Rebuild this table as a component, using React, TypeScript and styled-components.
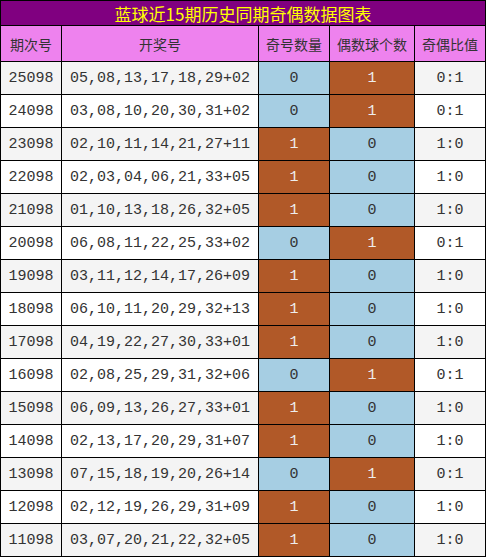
import React from 'react'
import styled, { createGlobalStyle } from 'styled-components'

const GlobalStyle = createGlobalStyle`
    body {
        margin: 0;
        background: #fff;
    }
`

const Grid = styled.div`
    display: grid;
    grid-template-columns: 60px 196px 70px 84px 70px;
    grid-template-rows: 24px 35px;
    grid-auto-rows: 32px;
    gap: 1px;
    padding: 1px;
    width: 486px;
    box-sizing: border-box;
    background: #000;
`

const Title = styled.div`
    grid-column: 1 / -1;
    background: #800080;
    color: #ffff00;
    font-family: 'Noto Sans CJK SC', sans-serif;
    font-size: 17px;
    display: flex;
    align-items: center;
    justify-content: center;
    line-height: 1;
`

const Head = styled.div`
    background: #ee82ee;
    color: #333;
    font-family: 'Noto Sans CJK SC', sans-serif;
    font-size: 14px;
    display: flex;
    align-items: center;
    justify-content: center;
`

type Tone = 'odd' | 'even' | 'blue' | 'brown'

const toneBg: Record<Tone, string> = {
    odd: '#f4f4f4',
    even: '#ffffff',
    blue: '#a6cee3',
    brown: '#b15928',
}

const Cell = styled.div<{ $tone: Tone }>`
    background: ${p => toneBg[p.$tone]};
    color: ${p => (p.$tone === 'brown' ? '#eeeeee' : '#333')};
    font-family: 'Liberation Mono', 'Courier New', monospace;
    font-size: 15px;
    display: flex;
    align-items: center;
    justify-content: center;
`

const rows: [string, string][] = [
    ['25098', '05,08,13,17,18,29+02'],
    ['24098', '03,08,10,20,30,31+02'],
    ['23098', '02,10,11,14,21,27+11'],
    ['22098', '02,03,04,06,21,33+05'],
    ['21098', '01,10,13,18,26,32+05'],
    ['20098', '06,08,11,22,25,33+02'],
    ['19098', '03,11,12,14,17,26+09'],
    ['18098', '06,10,11,20,29,32+13'],
    ['17098', '04,19,22,27,30,33+01'],
    ['16098', '02,08,25,29,31,32+06'],
    ['15098', '06,09,13,26,27,33+01'],
    ['14098', '02,13,17,20,29,31+07'],
    ['13098', '07,15,18,19,20,26+14'],
    ['12098', '02,12,19,26,29,31+09'],
    ['11098', '03,07,20,21,22,32+05'],
]

const headers = ['期次号', '开奖号', '奇号数量', '偶数球个数', '奇偶比值']

const App: React.FC = () => {
    return (
        <>
            <GlobalStyle />
            <Grid>
                <Title>蓝球近15期历史同期奇偶数据图表</Title>
                {headers.map(h => (
                    <Head key={h}>{h}</Head>
                ))}
                {rows.map(([issue, draw], i) => {
                    const blue = parseInt(draw.split('+')[1], 10)
                    const odd = blue % 2
                    const even = 1 - odd
                    const base: Tone = i % 2 === 0 ? 'odd' : 'even'
                    return (
                        <React.Fragment key={issue}>
                            <Cell $tone={base}>{issue}</Cell>
                            <Cell $tone={base}>{draw}</Cell>
                            <Cell $tone={odd ? 'brown' : 'blue'}>{odd}</Cell>
                            <Cell $tone={even ? 'brown' : 'blue'}>{even}</Cell>
                            <Cell $tone={base}>{`${odd}:${even}`}</Cell>
                        </React.Fragment>
                    )
                })}
            </Grid>
        </>
    )
}

export default App
